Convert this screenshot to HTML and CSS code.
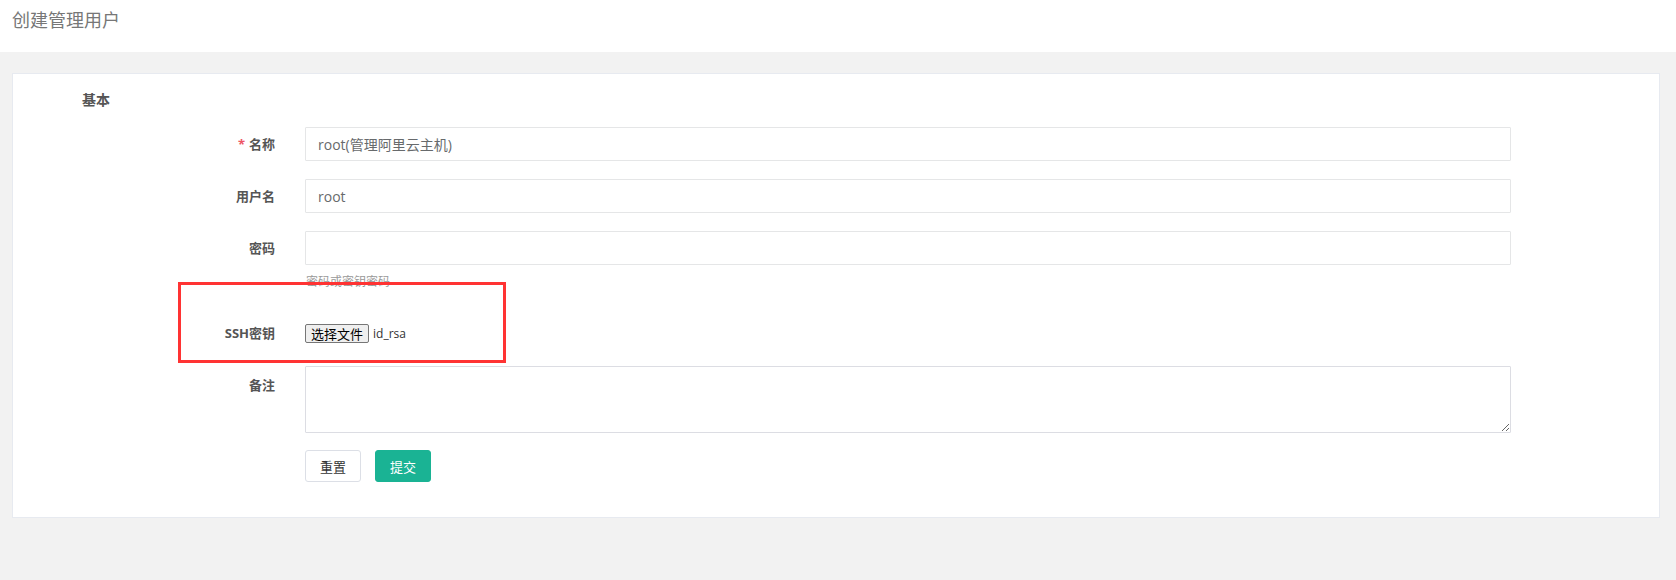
FILE: index.html
```html
<!DOCTYPE html>
<html lang="zh-CN">
<head>
<meta charset="utf-8">
<title>创建管理用户</title>
<link rel="stylesheet" href="styles.css">
</head>
<body>
<header class="page-header">
  <h1 class="page-title">创建管理用户</h1>
</header>
<main class="page-body">
  <section class="card">
    <h2 class="section-title">基本</h2>
    <form class="form">
      <div class="row">
        <label class="label"><span class="req">*</span>名称</label>
        <div class="field"><input class="input" type="text" value="root(管理阿里云主机)"></div>
      </div>
      <div class="row">
        <label class="label">用户名</label>
        <div class="field"><input class="input" type="text" value="root"></div>
      </div>
      <div class="row row-pwd">
        <label class="label">密码</label>
        <div class="field">
          <input class="input" type="password" value="">
          <div class="hint">密码或密钥密码</div>
        </div>
      </div>
      <div class="row row-ssh">
        <label class="label">SSH密钥</label>
        <div class="field file-field">
          <button type="button" class="file-btn">选择文件</button>
          <span class="file-name">id_rsa</span>
        </div>
      </div>
      <div class="row row-note">
        <label class="label label-top">备注</label>
        <div class="field"><textarea class="textarea"></textarea></div>
      </div>
      <div class="row row-actions">
        <div class="label"></div>
        <div class="field actions">
          <button type="button" class="btn btn-default">重置</button>
          <button type="button" class="btn btn-primary">提交</button>
        </div>
      </div>
    </form>
    <div class="highlight-box"></div>
  </section>
</main>
</body>
</html>
```

FILE: styles.css
```css
* { box-sizing: border-box; }
html, body { margin: 0; padding: 0; }
body {
  background: #f2f2f2;
  font-family: "Open Sans", "Noto Sans CJK SC", sans-serif;
  font-size: 13px;
  color: #676a6c;
  min-height: 580px;
}
.page-header {
  background: #ffffff;
  height: 52px;
  padding-left: 12px;
}
.page-title {
  margin: 0;
  font-size: 18px;
  font-weight: 400;
  line-height: 40px;
  color: #777;
}
.page-body {
  padding: 21px 16px 0 12px;
}
.card {
  position: relative;
  background: #fff;
  border: 1px solid #e7eaf0;
  height: 445px;
  padding: 16px 148px 0 0;
}
.section-title {
  margin: 0 0 17px 69px;
  font-size: 14px;
  line-height: 20px;
  font-weight: 700;
  color: #555;
}
.form { display: flex; flex-direction: column; }
.row { display: flex; margin-bottom: 18px; }
.label {
  width: 262px;
  flex: none;
  text-align: right;
  font-weight: 700;
  font-size: 13px;
  color: #555;
  line-height: 34px;
  margin-right: 30px;
}
.req { color: #ed5565; margin-right: 4px; }
.field { flex: 1; min-width: 0; }
.input {
  display: block;
  width: 100%;
  height: 34px;
  border: 1px solid #e5e6e7;
  border-radius: 1px;
  padding: 0 12px;
  font-family: "Open Sans", "Noto Sans CJK SC", sans-serif;
  font-size: 14px;
  color: #676a6c;
  background: #fff;
  outline: none;
}
.hint {
  margin-top: 8px;
  font-size: 12px;
  line-height: 18px;
  color: #999;
  padding-left: 1px;
}
.row-pwd { margin-bottom: 25px; }
.row-ssh { margin-bottom: 16px; }
.file-field { display: flex; align-items: center; height: 34px; }
.file-btn {
  font-family: "Noto Sans CJK SC", sans-serif;
  font-size: 13px;
  line-height: 15px;
  height: 19px;
  padding: 1px 5px;
  color: #000;
  background: #efefef;
  border: 1px solid #767676;
  border-radius: 2px;
}
.file-name {
  margin-left: 4px;
  font-size: 12px;
  color: #333;
}
.label-top { line-height: 38px; }
.textarea {
  display: block;
  width: 100%;
  height: 67px;
  border: 1px solid #dcdde3;
  border-radius: 1px;
  padding: 6px 12px;
  font-family: "Open Sans", "Noto Sans CJK SC", sans-serif;
  font-size: 14px;
  color: #676a6c;
  outline: none;
}
.row-note { margin-bottom: 17px; }
.row-actions { margin-bottom: 0; }
.actions { display: flex; gap: 14px; }
.btn {
  height: 32px;
  width: 56px;
  padding: 0;
  font-family: "Noto Sans CJK SC", sans-serif;
  font-size: 13px;
  border-radius: 3px;
  cursor: pointer;
}
.btn-default {
  background: #fff;
  border: 1px solid #dcdfe6;
  color: #333;
}
.btn-primary {
  background: #1ab394;
  border: 1px solid #1ab394;
  color: #fff;
}
.highlight-box {
  position: absolute;
  left: 165px;
  top: 208px;
  width: 328px;
  height: 81px;
  border: 3px solid #ff3333;
  pointer-events: none;
}
```
